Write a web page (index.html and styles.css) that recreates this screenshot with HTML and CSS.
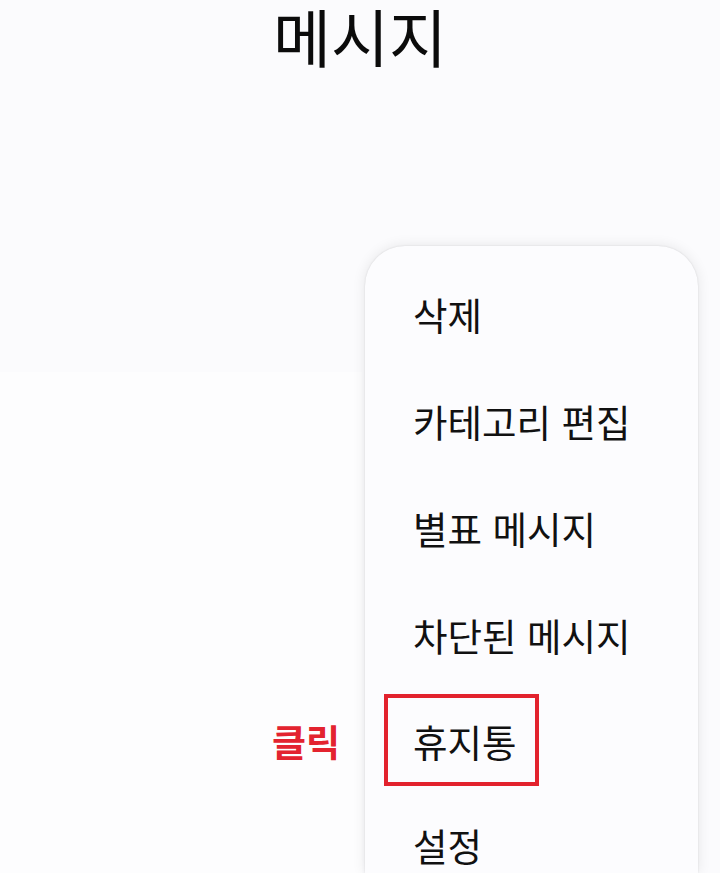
FILE: index.html
```html
<!DOCTYPE html>
<html lang="ko">
<head>
    <meta charset="UTF-8">
    <meta name="viewport" content="width=device-width, initial-scale=1.0">
    <title>메시지</title>
    <link rel="stylesheet" href="styles.css">
</head>
<body>
    <div class="screen">
        <h1 class="title">메시지</h1>

        <div class="content">
            <div class="list-area">
                <div class="list-panel"></div>
            </div>

            <ul class="menu">
                <li class="menu-item">삭제</li>
                <li class="menu-item">카테고리 편집</li>
                <li class="menu-item">별표 메시지</li>
                <li class="menu-item">차단된 메시지</li>
                <li class="menu-item">
                    <span class="mark">휴지통</span>
                    <span class="click-label">클릭</span>
                </li>
                <li class="menu-item menu-item-last">설정</li>
            </ul>
        </div>
    </div>
</body>
</html>
```

FILE: styles.css
```css
html, body {
    margin: 0;
    padding: 0;
    height: 100%;
    overflow: hidden;
}

body {
    font-family: "Noto Sans CJK KR", "Noto Sans", sans-serif;
    background-color: #fbfbfd;
    color: #111;
}

.screen {
    display: flex;
    flex-direction: column;
    height: 100%;
}

.title {
    margin: 0;
    font-size: 63px;
    font-weight: 400;
    line-height: 70px;
    text-align: center;
    color: #0b0b0b;
}

.content {
    flex: 1;
    display: flex;
    padding-top: 176px;
}

.list-area {
    width: 362px;
    display: flex;
    flex-direction: column;
}

.list-panel {
    margin-top: 126px;
    flex: 1;
    background-color: #fdfdfe;
}

.menu {
    list-style: none;
    margin: 0 0 0 3px;
    padding: 14px 0 0 48px;
    width: 333px;
    box-sizing: border-box;
    background-color: #fcfcfe;
    border-radius: 40px 40px 0 0;
    box-shadow: 0 0 14px rgba(0, 0, 0, 0.09), 0 0 2px rgba(0, 0, 0, 0.12);
}

.menu-item {
    position: relative;
    display: flex;
    align-items: center;
    height: 107px;
    font-size: 37.5px;
    color: #111;
}

.menu-item-last {
    align-items: flex-start;
    height: auto;
    padding-top: 24px;
    line-height: 52px;
}

.mark {
    display: inline-flex;
    align-items: center;
    height: 92px;
    margin: -3px 0 0 -29px;
    padding: 0 18px 0 25px;
    border: 4px solid #e2222d;
    box-sizing: border-box;
}

.click-label {
    position: absolute;
    right: 358px;
    top: 50%;
    transform: translateY(-52%);
    font-size: 37px;
    font-weight: 700;
    color: #e3232f;
    white-space: nowrap;
}
```
